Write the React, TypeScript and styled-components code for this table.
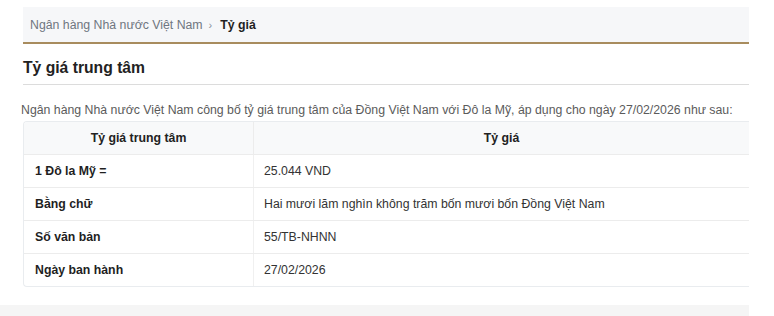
import React from "react";
import styled, { createGlobalStyle } from "styled-components";

const Global = createGlobalStyle`
  html, body { margin: 0; padding: 0; background: #ffffff; }
  body { font-family: "Liberation Sans", Arial, sans-serif; }
`;

const Page = styled.div`
  width: 774px;
  height: 316px;
  overflow: hidden;
  display: flex;
  flex-direction: column;
`;

const Main = styled.div`
  padding: 7px 25px 0 23px;
  display: flex;
  flex-direction: column;
`;

const Breadcrumb = styled.nav`
  height: 35px;
  background: #f6f7f9;
  border-bottom: 2px solid #a88c5e;
  display: flex;
  align-items: center;
  padding-left: 7px;
  font-size: 12.3px;
  color: #6f7680;
  gap: 6px;
`;

const Crumb = styled.span<{ $active?: boolean }>`
  color: ${(p) => (p.$active ? "#1f1f1f" : "#6f7680")};
  font-weight: ${(p) => (p.$active ? 700 : 400)};
`;

const Sep = styled.span`
  color: #8a9099;
  font-size: 11px;
  margin-right: 2px;
`;

const Title = styled.h1`
  margin: 0;
  height: 41px;
  display: flex;
  align-items: center;
  border-bottom: 1px solid #dcdcdc;
  font-size: 15.7px;
  font-weight: 700;
  color: #222;
  padding-top: 7px;
  box-sizing: border-box;
`;

const Desc = styled.p`
  margin: 0;
  padding-top: 18px;
  height: 36px;
  box-sizing: border-box;
  font-size: 12.3px;
  color: #5b5b5b;
  margin-left: -2px;
  white-space: nowrap;
`;

const TableWrap = styled.div`
  border: 1px solid #e9ecef;
  border-right: none;
  border-radius: 4px 0 0 4px;
  overflow: hidden;
`;

const Table = styled.table`
  width: 100%;
  border-collapse: collapse;
  font-size: 12.3px;
  color: #222;
`;

const Th = styled.th<{ $first?: boolean }>`
  height: 32px;
  background: #f8f9fa;
  font-weight: 700;
  text-align: center;
  padding: 0;
  border-bottom: 1px solid #ececec;
  border-right: ${(p) => (p.$first ? "1px solid #ececec" : "none")};
  width: ${(p) => (p.$first ? "229px" : "auto")};
`;

const Td = styled.td<{ $label?: boolean; $last?: boolean }>`
  height: 32px;
  padding: 0 0 0 ${(p) => (p.$label ? "11px" : "10px")};
  font-weight: ${(p) => (p.$label ? 700 : 400)};
  color: ${(p) => (p.$label ? "#1f1f1f" : "#333")};
  border-right: ${(p) => (p.$label ? "1px solid #f0f0f0" : "none")};
  border-bottom: ${(p) => (p.$last ? "none" : "1px solid #ececec")};
`;

const Footer = styled.div`
  margin-top: 18px;
  width: 749px;
  height: 20px;
  background: #f5f5f5;
`;

const rows: [string, string][] = [
  ["1 Đô la Mỹ =", "25.044 VND"],
  ["Bằng chữ", "Hai mươi lăm nghìn không trăm bốn mươi bốn Đồng Việt Nam"],
  ["Số văn bản", "55/TB-NHNN"],
  ["Ngày ban hành", "27/02/2026"],
];

export default function App() {
  return (
    <Page>
      <Global />
      <Main>
        <Breadcrumb>
          <Crumb>Ngân hàng Nhà nước Việt Nam</Crumb>
          <Sep>›</Sep>
          <Crumb $active>Tỷ giá</Crumb>
        </Breadcrumb>
        <Title>Tỷ giá trung tâm</Title>
        <Desc>
          Ngân hàng Nhà nước Việt Nam công bố tỷ giá trung tâm của Đồng Việt Nam với Đô la Mỹ, áp dụng cho ngày 27/02/2026 như sau:
        </Desc>
        <TableWrap>
          <Table>
            <thead>
              <tr>
                <Th $first>Tỷ giá trung tâm</Th>
                <Th>Tỷ giá</Th>
              </tr>
            </thead>
            <tbody>
              {rows.map(([k, v], i) => (
                <tr key={k}>
                  <Td $label $last={i === rows.length - 1}>{k}</Td>
                  <Td $last={i === rows.length - 1}>{v}</Td>
                </tr>
              ))}
            </tbody>
          </Table>
        </TableWrap>
      </Main>
      <Footer />
    </Page>
  );
}
